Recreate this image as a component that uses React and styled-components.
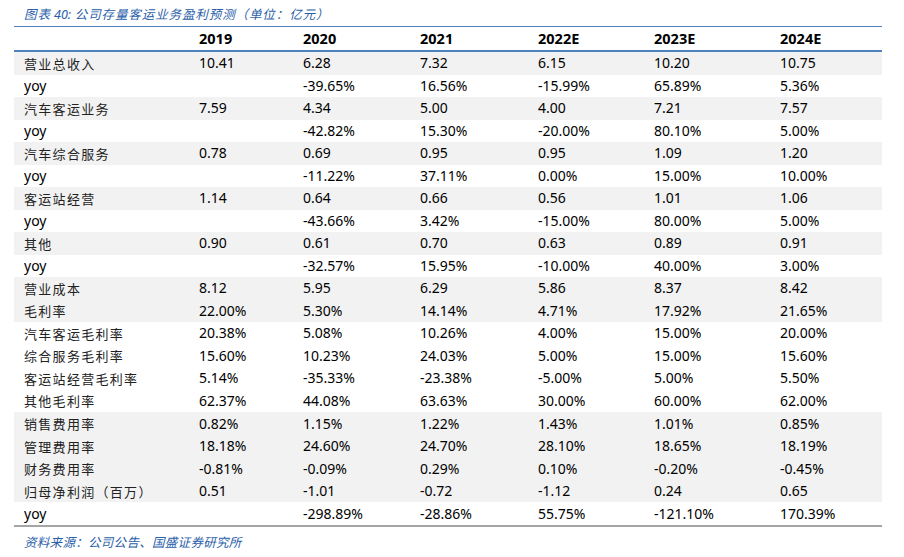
import React from "react"
import styled, { createGlobalStyle } from "styled-components"

const GlobalStyle = createGlobalStyle`
  body {
    margin: 0;
    background: #fff;
  }
`

const cols = "179px 104px 117px 118px 116px 126px 108px"

const Page = styled.div`
  width: 904px;
  height: 557px;
  padding-left: 14px;
  box-sizing: border-box;
  font-family: "Noto Sans", "Noto Sans CJK SC", sans-serif;
`

const Caption = styled.div`
  height: 27px;
  padding-left: 10px;
  display: flex;
  align-items: flex-end;
  padding-bottom: 3px;
  box-sizing: border-box;
  width: 868px;
  border-bottom: 1px solid #4f81bd;
  color: #2a5ea8;
  font-size: 12.5px;
  font-style: italic;
  font-family: "Noto Sans CJK SC", sans-serif;
  letter-spacing: 0.9px;
`

const Num = styled.span`
  font-family: "Noto Sans", sans-serif;
  letter-spacing: 0;
`

const Table = styled.div`
  width: 868px;
  border-bottom: 2px solid #a5a5a5;
`

const HeadRow = styled.div`
  display: grid;
  grid-template-columns: ${cols};
  height: 23px;
  align-items: center;
  border-bottom: 2px solid #4f81bd;
  font-weight: 700;
  font-size: 14.5px;
  color: #000;
`

const Row = styled.div`
  display: grid;
  grid-template-columns: ${cols};
  height: 22.52px;
  align-items: center;
  background: ${p => (p.$shade ? "#f2f2f2" : "#fff")};
  font-size: 14px;
  color: #000;
`

const Cell = styled.div`
  padding-left: 6px;
  white-space: nowrap;
  line-height: 1;
`

const Label = styled.div`
  padding-left: 10px;
  white-space: nowrap;
  line-height: 1;
  font-family: ${p => (p.$latin ? '"Noto Sans", sans-serif' : '"Noto Sans CJK SC", sans-serif')};
  font-size: ${p => (p.$latin ? "14px" : "13px")};
  letter-spacing: ${p => (p.$latin ? "0" : "1.3px")};
  color: ${p => (p.$latin ? "#000" : "#222")};
`

const Source = styled.div`
  padding: 5px 0 0 10px;
  color: #2a5ea8;
  font-size: 12.5px;
  font-style: italic;
  font-family: "Noto Sans CJK SC", sans-serif;
  letter-spacing: 0.3px;
`

const years = ["2019", "2020", "2021", "2022E", "2023E", "2024E"]

const rows = [
  ["营业总收入", 1, "10.41", "6.28", "7.32", "6.15", "10.20", "10.75"],
  ["yoy", 0, "", "-39.65%", "16.56%", "-15.99%", "65.89%", "5.36%"],
  ["汽车客运业务", 1, "7.59", "4.34", "5.00", "4.00", "7.21", "7.57"],
  ["yoy", 0, "", "-42.82%", "15.30%", "-20.00%", "80.10%", "5.00%"],
  ["汽车综合服务", 1, "0.78", "0.69", "0.95", "0.95", "1.09", "1.20"],
  ["yoy", 0, "", "-11.22%", "37.11%", "0.00%", "15.00%", "10.00%"],
  ["客运站经营", 1, "1.14", "0.64", "0.66", "0.56", "1.01", "1.06"],
  ["yoy", 0, "", "-43.66%", "3.42%", "-15.00%", "80.00%", "5.00%"],
  ["其他", 1, "0.90", "0.61", "0.70", "0.63", "0.89", "0.91"],
  ["yoy", 0, "", "-32.57%", "15.95%", "-10.00%", "40.00%", "3.00%"],
  ["营业成本", 1, "8.12", "5.95", "6.29", "5.86", "8.37", "8.42"],
  ["毛利率", 1, "22.00%", "5.30%", "14.14%", "4.71%", "17.92%", "21.65%"],
  ["汽车客运毛利率", 0, "20.38%", "5.08%", "10.26%", "4.00%", "15.00%", "20.00%"],
  ["综合服务毛利率", 0, "15.60%", "10.23%", "24.03%", "5.00%", "15.00%", "15.60%"],
  ["客运站经营毛利率", 0, "5.14%", "-35.33%", "-23.38%", "-5.00%", "5.00%", "5.50%"],
  ["其他毛利率", 0, "62.37%", "44.08%", "63.63%", "30.00%", "60.00%", "62.00%"],
  ["销售费用率", 1, "0.82%", "1.15%", "1.22%", "1.43%", "1.01%", "0.85%"],
  ["管理费用率", 1, "18.18%", "24.60%", "24.70%", "28.10%", "18.65%", "18.19%"],
  ["财务费用率", 1, "-0.81%", "-0.09%", "0.29%", "0.10%", "-0.20%", "-0.45%"],
  ["归母净利润（百万）", 1, "0.51", "-1.01", "-0.72", "-1.12", "0.24", "0.65"],
  ["yoy", 0, "", "-298.89%", "-28.86%", "55.75%", "-121.10%", "170.39%"],
]

export default function App() {
  return (
    <Page>
      <GlobalStyle />
      <Caption>
        图表<Num>&nbsp;40:</Num>&nbsp;公司存量客运业务盈利预测（单位：亿元）
      </Caption>
      <Table>
        <HeadRow>
          <Label />
          {years.map(y => (
            <Cell key={y}>{y}</Cell>
          ))}
        </HeadRow>
        {rows.map(([name, shade, ...vals], i) => (
          <Row key={i} $shade={shade}>
            <Label $latin={name === "yoy"}>{name}</Label>
            {vals.map((v, j) => (
              <Cell key={j}>{v}</Cell>
            ))}
          </Row>
        ))}
      </Table>
      <Source>资料来源：公司公告、国盛证券研究所</Source>
    </Page>
  )
}
